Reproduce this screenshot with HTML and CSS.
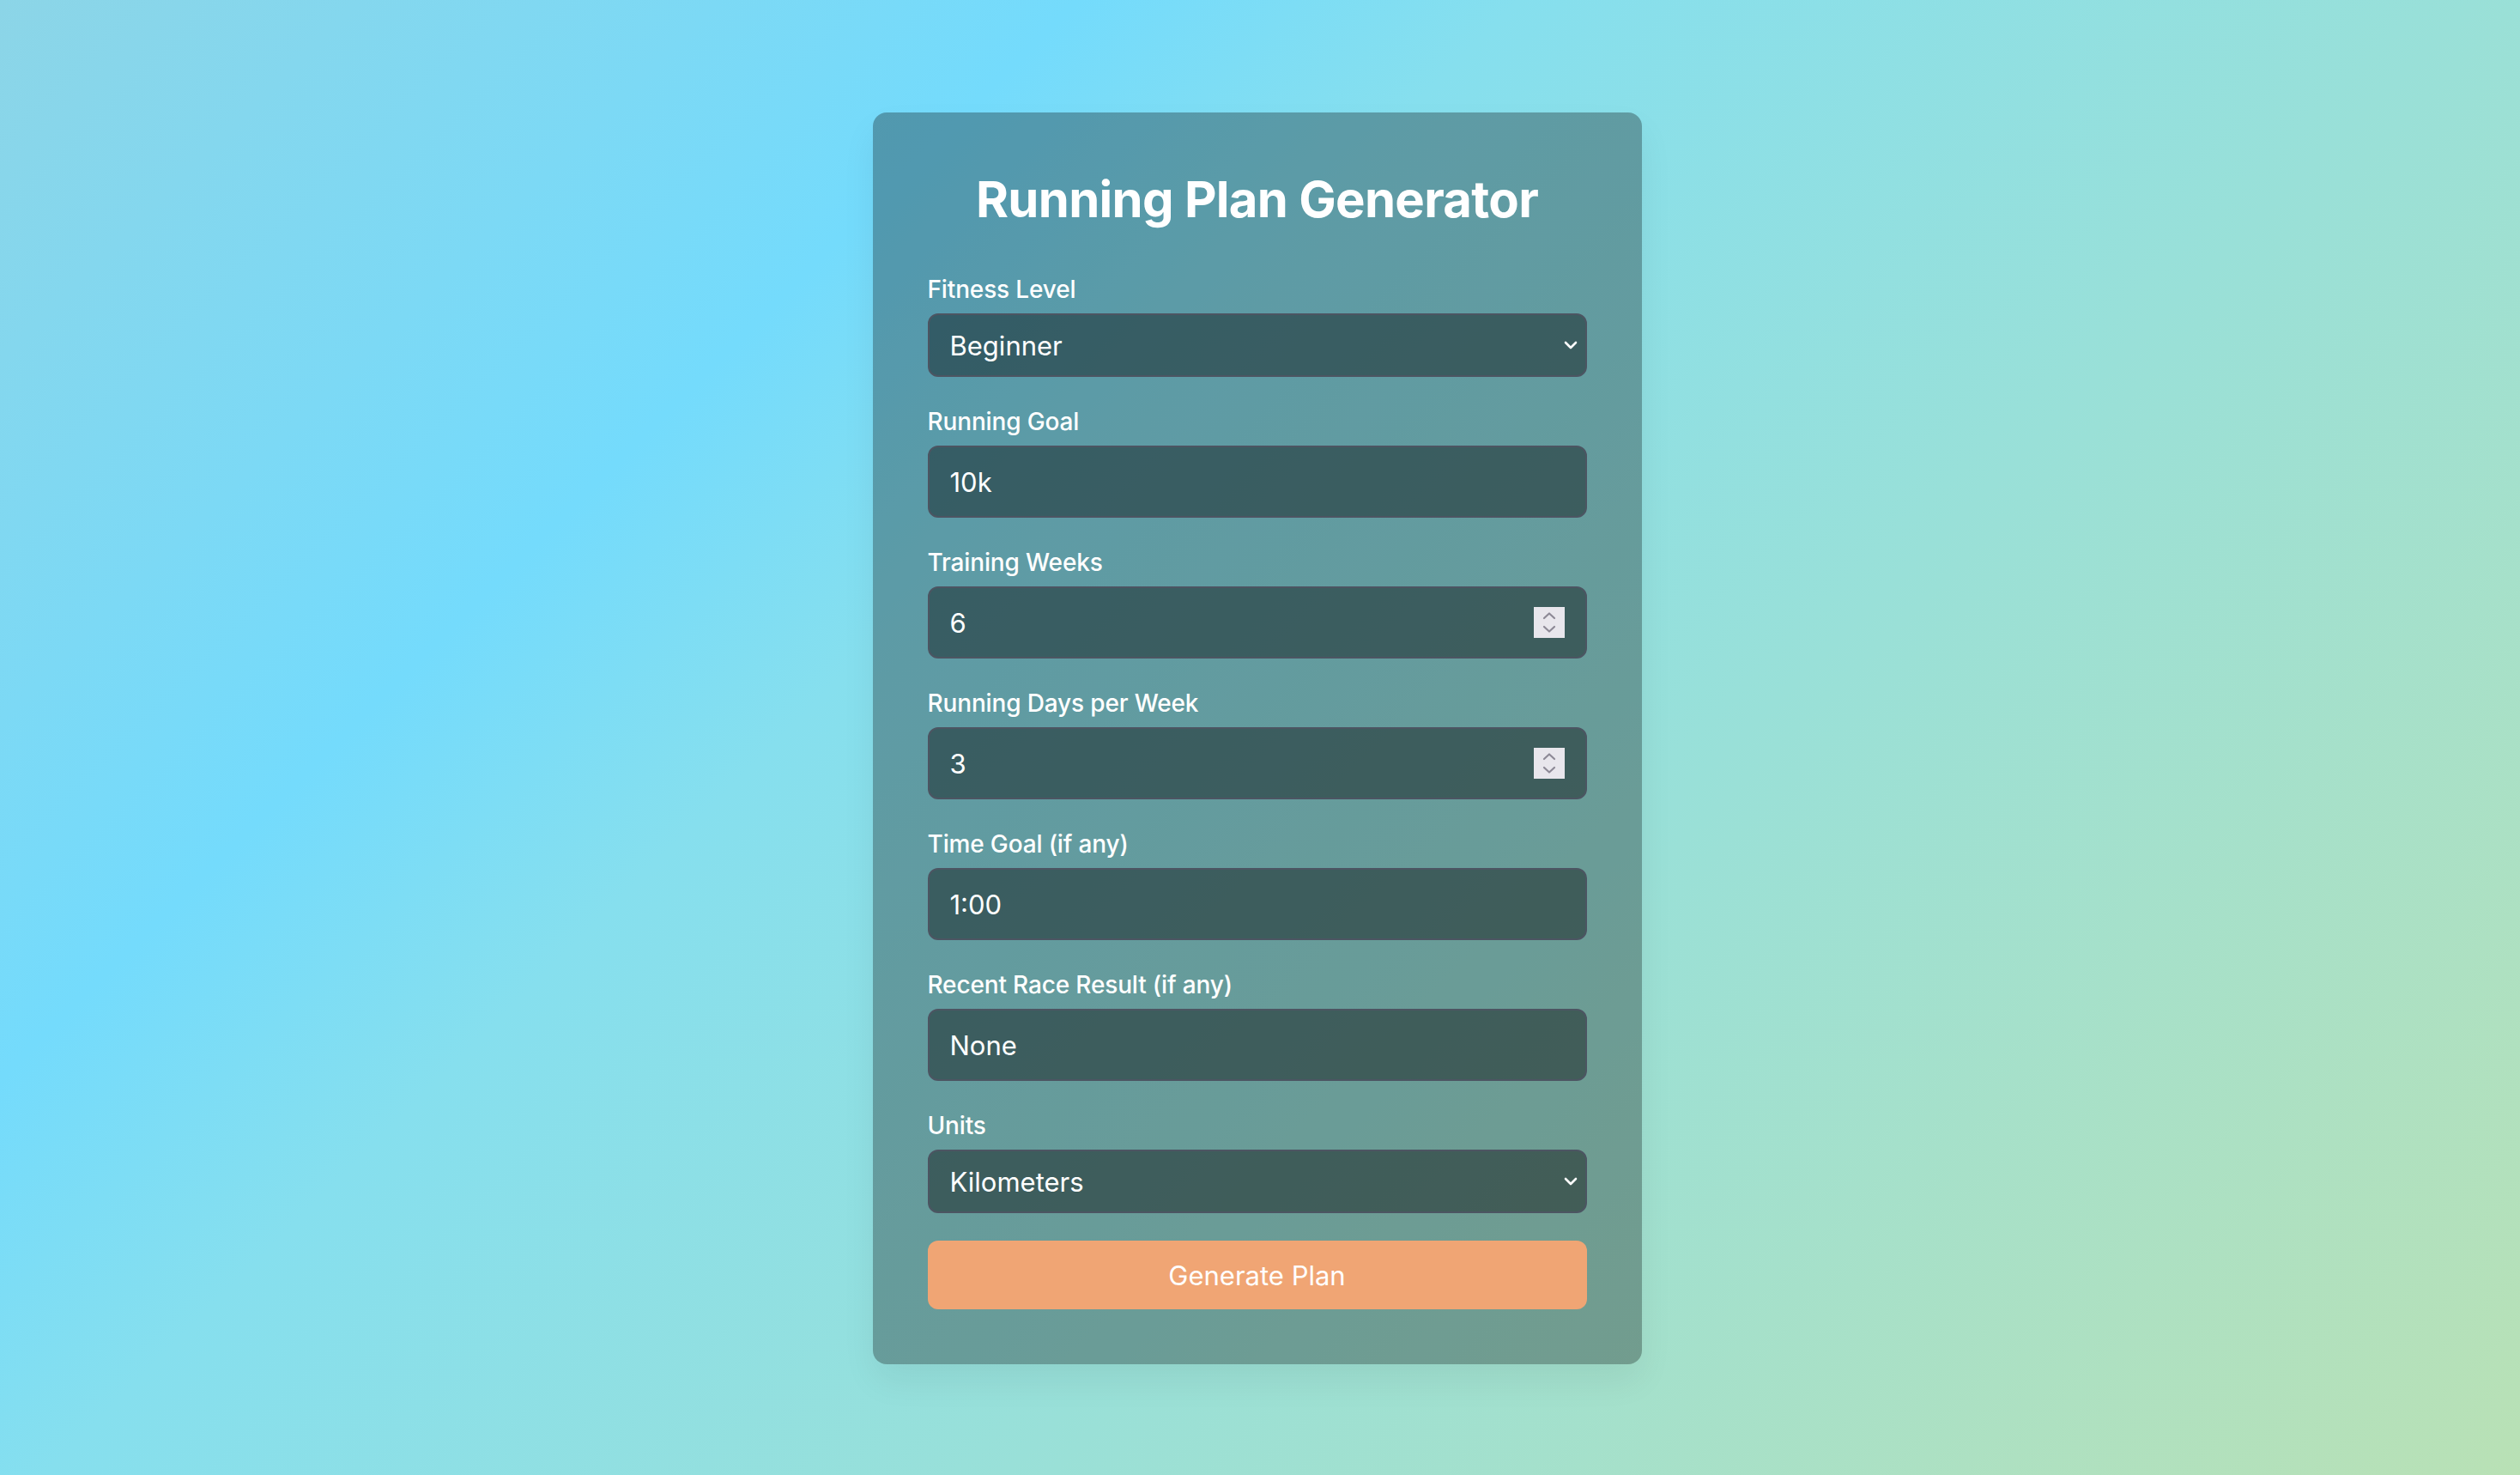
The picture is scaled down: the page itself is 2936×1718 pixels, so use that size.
FILE: index.html
```html
<!DOCTYPE html>
<html lang="en">
<head>
<meta charset="utf-8">
<title>Running Plan Generator</title>
<link rel="stylesheet" href="styles.css">
</head>
<body>
<main class="card">
  <h1 class="title">Running Plan Generator</h1>
  <form class="form">
    <div class="field">
      <label class="label">Fitness Level</label>
      <div class="control control-select">
        <span class="value">Beginner</span>
        <svg class="chev" width="16" height="10" viewBox="0 0 16 10"><path d="M2 2 L8 8 L14 2" fill="none" stroke="#fff" stroke-width="2.6" stroke-linecap="round" stroke-linejoin="round"/></svg>
      </div>
    </div>
    <div class="field">
      <label class="label">Running Goal</label>
      <div class="control control-input"><span class="value">10k</span></div>
    </div>
    <div class="field">
      <label class="label">Training Weeks</label>
      <div class="control control-input">
        <span class="value">6</span>
        <span class="spin"><svg width="36" height="36" viewBox="0 0 36 36"><path d="M12 13 L18 7.5 L24 13" fill="none" stroke="#8d8996" stroke-width="2.2" stroke-linecap="round" stroke-linejoin="round"/><path d="M12 23 L18 28.5 L24 23" fill="none" stroke="#8d8996" stroke-width="2.2" stroke-linecap="round" stroke-linejoin="round"/></svg></span>
      </div>
    </div>
    <div class="field">
      <label class="label">Running Days per Week</label>
      <div class="control control-input">
        <span class="value">3</span>
        <span class="spin"><svg width="36" height="36" viewBox="0 0 36 36"><path d="M12 13 L18 7.5 L24 13" fill="none" stroke="#8d8996" stroke-width="2.2" stroke-linecap="round" stroke-linejoin="round"/><path d="M12 23 L18 28.5 L24 23" fill="none" stroke="#8d8996" stroke-width="2.2" stroke-linecap="round" stroke-linejoin="round"/></svg></span>
      </div>
    </div>
    <div class="field">
      <label class="label">Time Goal (if any)</label>
      <div class="control control-input"><span class="value">1:00</span></div>
    </div>
    <div class="field">
      <label class="label">Recent Race Result (if any)</label>
      <div class="control control-input"><span class="value">None</span></div>
    </div>
    <div class="field">
      <label class="label">Units</label>
      <div class="control control-select">
        <span class="value">Kilometers</span>
        <svg class="chev" width="16" height="10" viewBox="0 0 16 10"><path d="M2 2 L8 8 L14 2" fill="none" stroke="#fff" stroke-width="2.6" stroke-linecap="round" stroke-linejoin="round"/></svg>
      </div>
    </div>
    <button type="button" class="btn">Generate Plan</button>
  </form>
</main>
</body>
</html>
```

FILE: styles.css
```css
html, body {
  margin: 0;
  padding: 0;
}
body {
  min-height: 100vh;
  display: flex;
  align-items: center;
  justify-content: center;
  font-family: Inter, "Noto Sans", "Liberation Sans", sans-serif;
  color: #fff;
  background: linear-gradient(135deg, #8cd5e7 0%, #74dbfc 27%, #86dfee 38%, #99e0d8 62%, #b9e1b5 100%);
  background-attachment: fixed;
}
.card {
  width: 896px;
  box-sizing: border-box;
  padding: 64px;
  margin: 2px 7px 0 0;
  background: rgba(0, 0, 0, 0.3);
  border-radius: 16px;
  box-shadow: 0 20px 40px rgba(0, 0, 0, 0.06);
}
.title {
  margin: 0 0 48px;
  font-size: 58px;
  line-height: 74px;
  font-weight: 700;
  text-align: center;
  letter-spacing: -0.7px;
}
.form {
  display: flex;
  flex-direction: column;
}
.field {
  margin-bottom: 32px;
}
.label {
  display: block;
  font-size: 28px;
  line-height: 40px;
  font-weight: 500;
  letter-spacing: -0.15px;
  margin-bottom: 8px;
}
.control {
  display: flex;
  align-items: center;
  box-sizing: border-box;
  background: rgba(0, 0, 0, 0.4);
  border: 2px solid #4c5562;
  border-radius: 12px;
  padding: 0 24px;
  font-size: 31px;
}
.control-select {
  height: 74px;
  padding-right: 9px;
}
.control-input {
  height: 84px;
}
.value {
  flex: 1;
}
.chev {
  display: block;
}
.spin {
  width: 36px;
  height: 36px;
  background: #e8e6ec;
  display: block;
}
.spin svg {
  display: block;
}
.btn {
  height: 80px;
  border: none;
  border-radius: 12px;
  background: #f0a574;
  color: #fff;
  font-family: Inter, "Noto Sans", "Liberation Sans", sans-serif;
  font-size: 31px;
  font-weight: 400;
  cursor: pointer;
}
```
